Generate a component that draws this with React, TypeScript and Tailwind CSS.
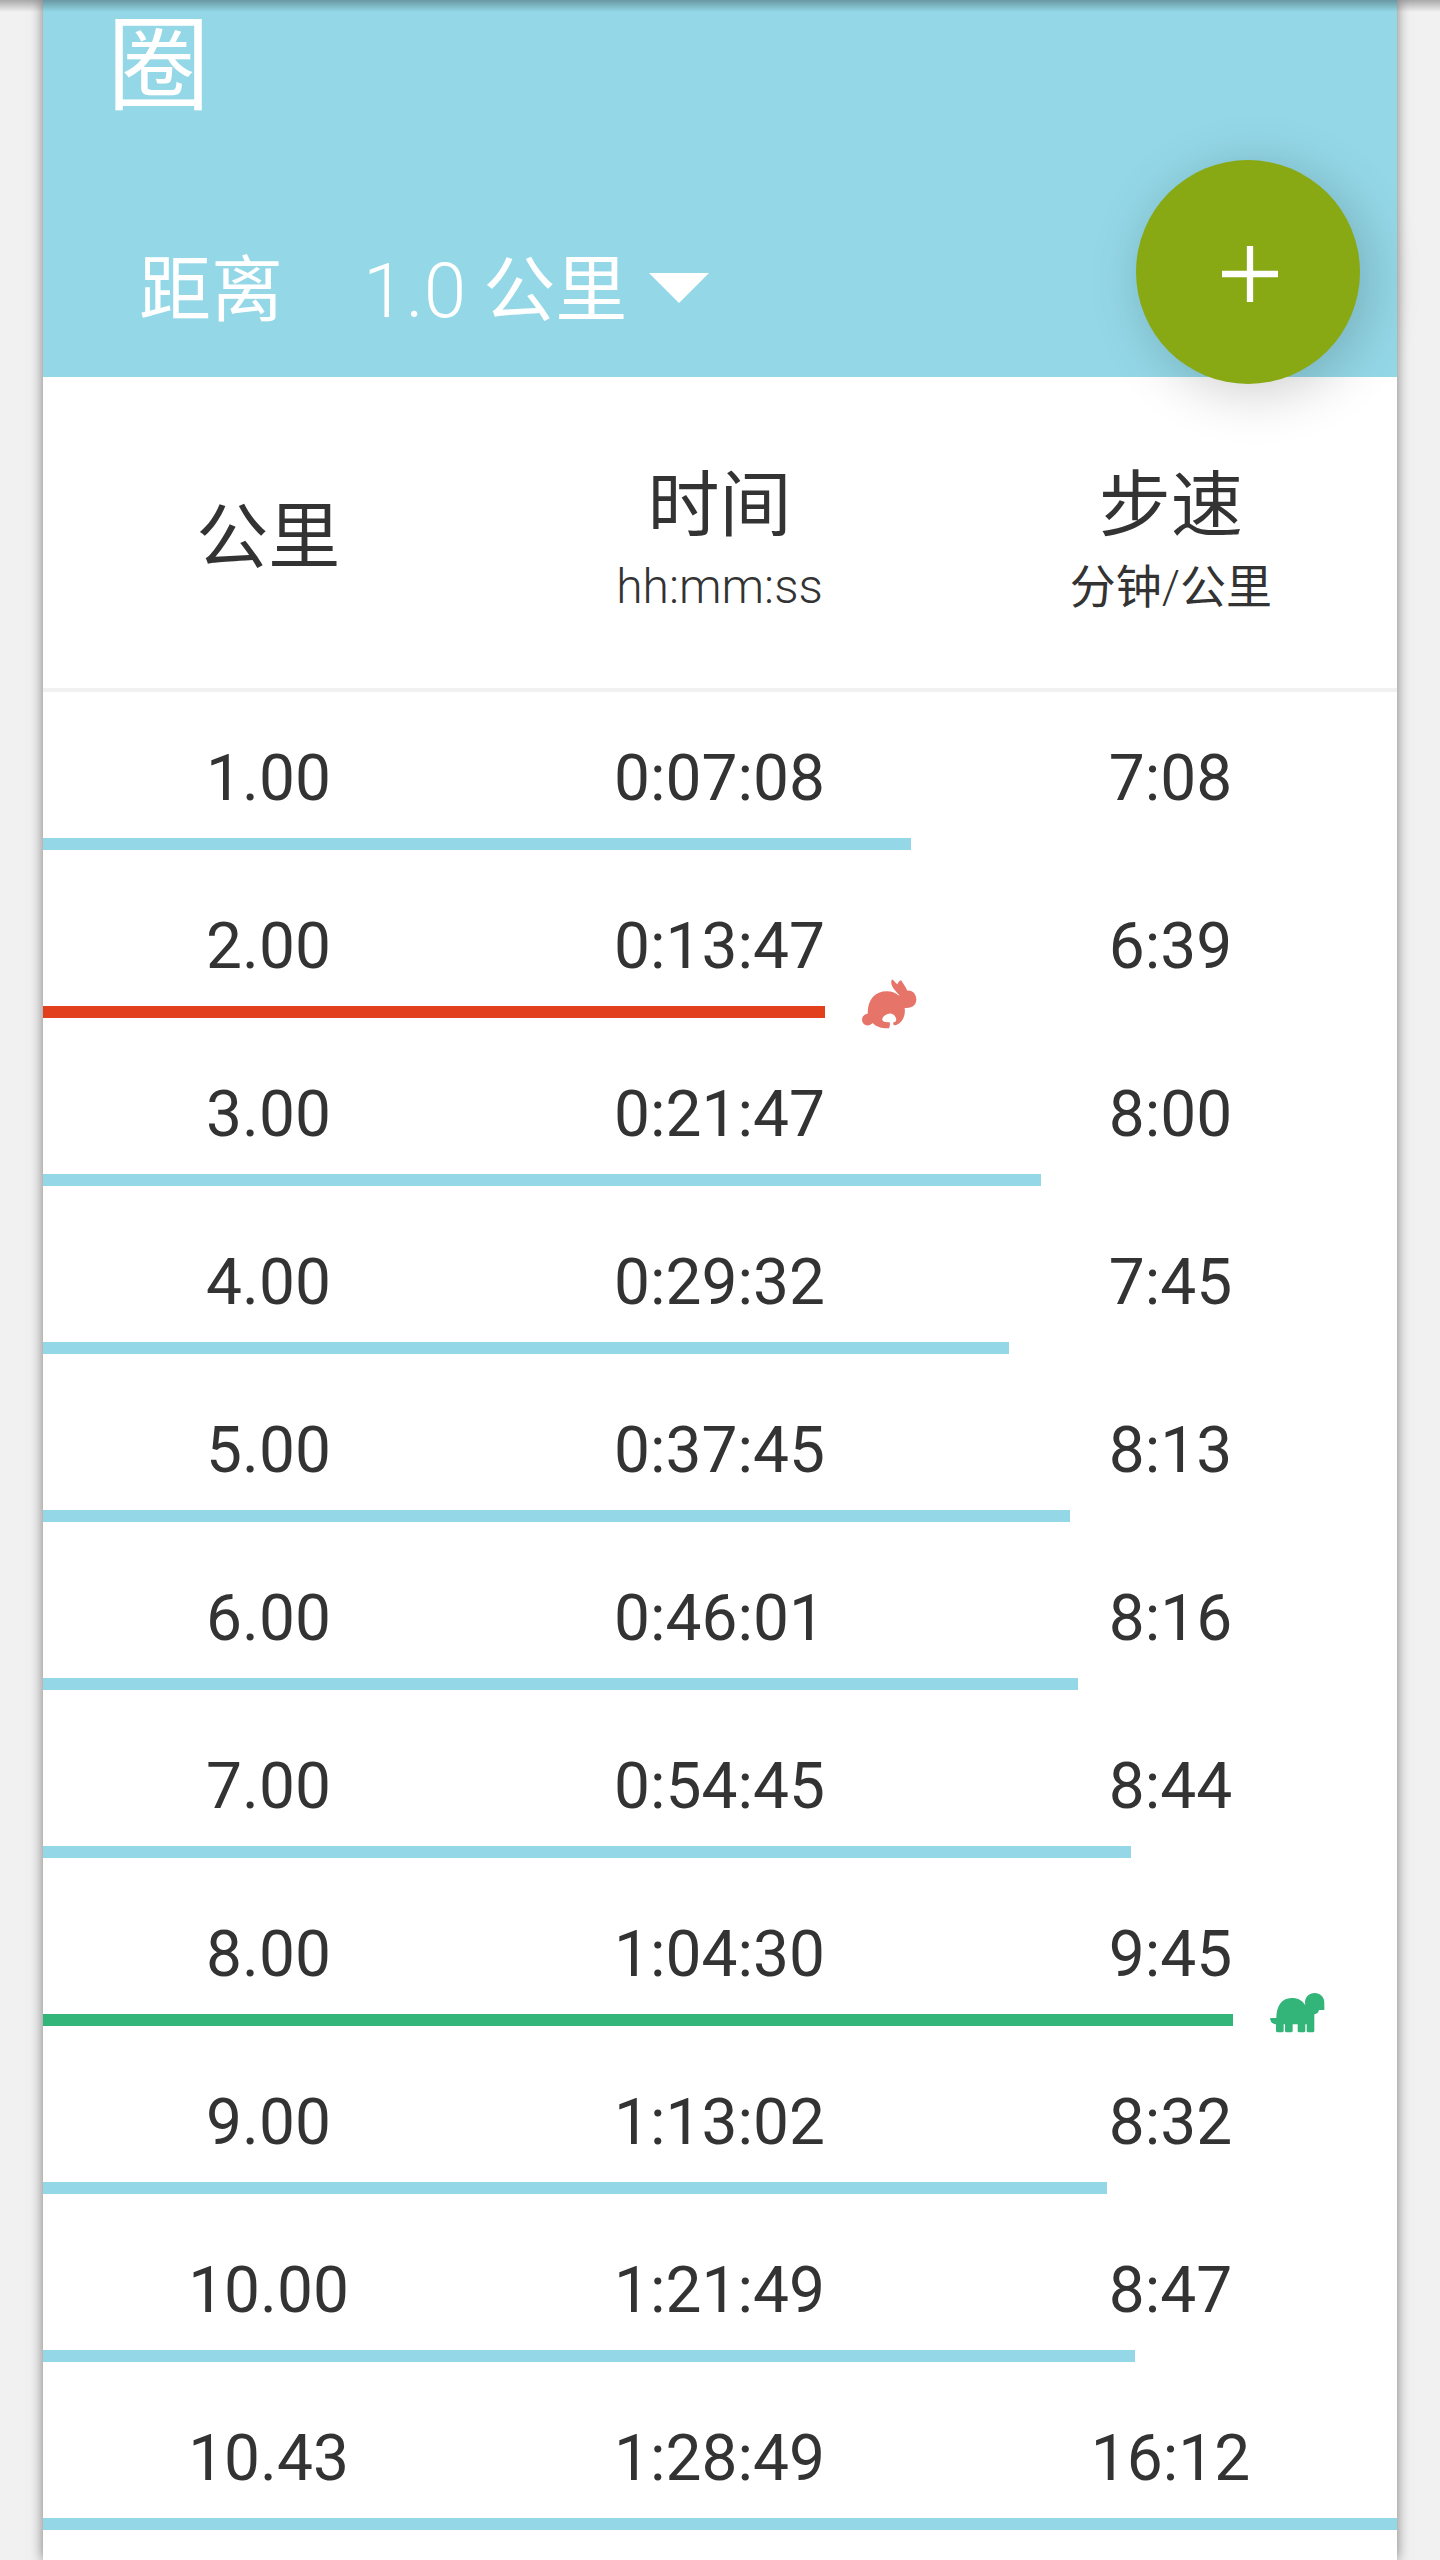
import type { ReactNode } from 'react';
import clsx from 'clsx';

type Lap = {
    distance: string;
    time: string;
    pace: string;
    bar: number;
    mark?: 'fastest' | 'slowest';
};

// bar = length of the pace bar in px
const laps: Lap[] = [
    { distance: '1.00', time: '0:07:08', pace: '7:08', bar: 868 },
    { distance: '2.00', time: '0:13:47', pace: '6:39', bar: 782, mark: 'fastest' },
    { distance: '3.00', time: '0:21:47', pace: '8:00', bar: 998 },
    { distance: '4.00', time: '0:29:32', pace: '7:45', bar: 966 },
    { distance: '5.00', time: '0:37:45', pace: '8:13', bar: 1027 },
    { distance: '6.00', time: '0:46:01', pace: '8:16', bar: 1035 },
    { distance: '7.00', time: '0:54:45', pace: '8:44', bar: 1088 },
    { distance: '8.00', time: '1:04:30', pace: '9:45', bar: 1190, mark: 'slowest' },
    { distance: '9.00', time: '1:13:02', pace: '8:32', bar: 1064 },
    { distance: '10.00', time: '1:21:49', pace: '8:47', bar: 1092 },
    { distance: '10.43', time: '1:28:49', pace: '16:12', bar: 1354 },
];

function RabbitIcon() {
    return (
        <svg viewBox="60 54 174 156" className="ml-[35px] -mt-4 h-[52px] w-[58px] shrink-0 fill-[#e67468]">
            <path d="M156 58C161 61 166 68 172 73C174 68 178 62 183 61C189 70 197 81 202 92C216 89 229 102 229 118C229 134 218 146 194 144C197 166 188 188 169 195C162 198 157 194 161 187C168 187 170 181 168 175C165 164 155 160 147 161C136 162 126 171 127 180C130 187 140 186 149 187C151 193 149 200 147 205C127 206 109 201 98 189C89 199 75 198 69 189C62 178 68 162 83 161C83 118 105 94 141 94C155 94 165 98 175 106L179 106C166 93 147 73 156 58Z" />
        </svg>
    );
}

function TurtleIcon() {
    return (
        <svg viewBox="174 48 174 156" className="ml-[35px] -mt-4 h-[52px] w-[58px] shrink-0 fill-[#33b579]">
            <path d="M181 144H199C199 110 214 84 245 84C265 84 278 92 286 106C281 84 296 69 314 69C330 69 343 81 343 98V120H327C326 127 321 132 313 133V182Q313 187 308 187H295Q290 187 290 182V163H286V182Q286 187 281 187H268Q263 187 263 182V163H248V182Q248 187 243 187H230Q225 187 225 182V163H221V182Q221 187 216 187H203Q198 187 198 182V163C188 162 179 155 181 144Z" />
        </svg>
    );
}

function HeaderCell({ title, unit }: { title: string; unit?: ReactNode }) {
    return (
        <div className="flex flex-col items-center pr-px">
            <div className="text-[72px] leading-[84px]">{title}</div>
            {unit && <div className="h-[78px] text-[48px] leading-[78px]">{unit}</div>}
        </div>
    );
}

function LapRow({ lap }: { lap: Lap }) {
    return (
        <div className="h-[168px]">
            <div className="grid h-[146px] grid-cols-3 pt-[52px] pr-px text-center text-[64px] leading-[70px]">
                <span>{lap.distance}</span>
                <span>{lap.time}</span>
                <span>{lap.pace}</span>
            </div>
            <div className="flex h-3 items-center">
                <div
                    className={clsx(
                        'h-3 shrink-0',
                        lap.mark === 'fastest' && 'bg-[#e2401c]',
                        lap.mark === 'slowest' && 'bg-[#33b579]',
                        !lap.mark && 'bg-[#94d8e7]'
                    )}
                    style={{ width: lap.bar }}
                />
                {lap.mark === 'fastest' && <RabbitIcon />}
                {lap.mark === 'slowest' && <TurtleIcon />}
            </div>
        </div>
    );
}

export default function App() {
    return (
        <div className="relative h-[2560px] w-[1440px] overflow-hidden bg-[#f1f1f1] font-['Roboto','Noto_Sans_CJK_SC',sans-serif] text-[#333333]">
            <main className="mx-[43px] h-full bg-white shadow-[0_0_12px_rgba(0,0,0,0.5)]">
                <header className="relative flex h-[377px] flex-col bg-[#94d8e7] text-white">
                    <h1 className="ml-[64px] h-[132px] text-[103px] leading-[134px]">圈</h1>
                    <div className="mt-[109px] flex h-[100px] items-center pl-[96px] text-[72px] leading-[100px]">
                        <span className="w-[224px]">距离</span>
                        <span className="mr-[17px] font-light text-[76.5px]">1.0</span>
                        <span>公里</span>
                        <svg viewBox="0 0 60 30" className="ml-[22px] -mt-[6px] h-[30px] w-[60px] fill-white">
                            <path d="M0 0H60L30 30Z" />
                        </svg>
                    </div>

                    {/* Add lap */}
                    <button
                        aria-label="添加"
                        className="absolute top-[160px] right-[37px] flex h-[224px] w-[224px] items-center justify-center rounded-full bg-[#88a914] shadow-[8px_8px_56px_rgba(0,0,0,0.2)]"
                    >
                        <svg viewBox="0 0 60 60" className="ml-[3px] mt-[3px] h-[60px] w-[60px] stroke-white stroke-[6.3]">
                            <path d="M30 2V58M2 30H58" />
                        </svg>
                    </button>
                </header>

                <div className="grid h-[315px] grid-cols-3 border-b-4 border-[#f1f1f1] pt-[87px]">
                    <div className="pt-[32px]">
                        <HeaderCell title="公里" />
                    </div>
                    <HeaderCell title="时间" unit={<span className="font-light">hh:mm:ss</span>} />
                    <HeaderCell
                        title="步速"
                        unit={
                            <span className="text-[46px]">
                                分钟<span className="font-light">/</span>公里
                            </span>
                        }
                    />
                </div>

                {laps.map((lap) => (
                    <LapRow key={lap.distance} lap={lap} />
                ))}
            </main>

            {/* Shadow of the toolbar above */}
            <div className="absolute inset-x-0 top-0 h-[12px] bg-linear-to-b from-black/30 to-transparent" />
        </div>
    );
}
